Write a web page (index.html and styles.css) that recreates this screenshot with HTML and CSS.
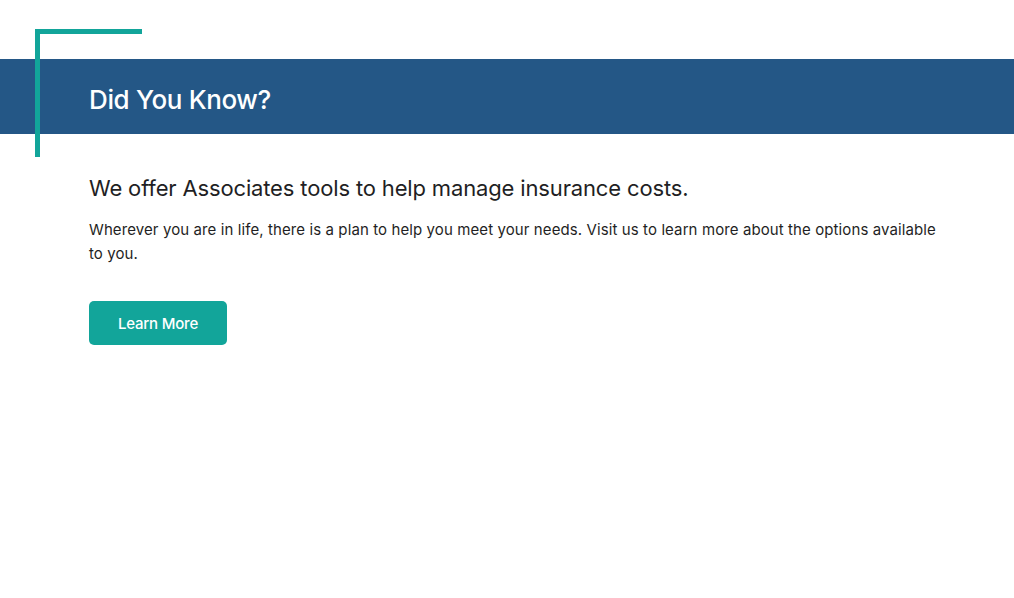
FILE: index.html
```html
<!DOCTYPE html>
<html lang="en">
<head>
<meta charset="utf-8">
<title>Did You Know?</title>
<link rel="stylesheet" href="styles.css">
</head>
<body>
<section class="promo">
  <div class="bracket" aria-hidden="true"></div>
  <header class="band">
    <h1 class="band-title">Did You Know?</h1>
  </header>
  <div class="content">
    <h2 class="lead">We offer Associates tools to help manage insurance costs.</h2>
    <p class="body">Wherever you are in life, there is a plan to help you meet your needs. Visit us to learn more about the options available to you.</p>
    <a class="btn" href="#">Learn More</a>
  </div>
</section>
</body>
</html>
```
FILE: styles.css
```css
html, body {
  margin: 0;
  padding: 0;
  background: #ffffff;
}
body {
  font-family: Inter, "Noto Sans", "Liberation Sans", sans-serif;
  color: #1f1f24;
}
.promo {
  position: relative;
  padding-top: 59px;
}
.bracket {
  position: absolute;
  left: 35px;
  top: 29px;
  width: 107px;
  height: 128px;
  border-top: 5px solid #12a59a;
  border-left: 5px solid #12a59a;
  box-sizing: border-box;
  z-index: 2;
}
.band {
  background: #245786;
  height: 75px;
  box-sizing: border-box;
  padding: 5px 0 0 89px;
  display: flex;
  align-items: center;
}
.band-title {
  margin: 0;
  color: #ffffff;
  font-size: 26px;
  font-weight: 500;
  letter-spacing: -0.35px;
}
.content {
  padding: 39px 70px 0 89px;
}
.lead {
  margin: 0;
  font-size: 22px;
  font-weight: 400;
  line-height: 30px;
  letter-spacing: -0.15px;
}
.body {
  margin: 15px 0 0;
  font-size: 15px;
  line-height: 24px;
  letter-spacing: 0.1px;
}
.btn {
  display: inline-flex;
  align-items: center;
  justify-content: center;
  margin-top: 35px;
  width: 138px;
  height: 44px;
  background: #12a59a;
  color: #ffffff;
  border-radius: 5px;
  text-decoration: none;
  font-size: 15px;
  font-weight: 500;
  letter-spacing: -0.2px;
}
```
